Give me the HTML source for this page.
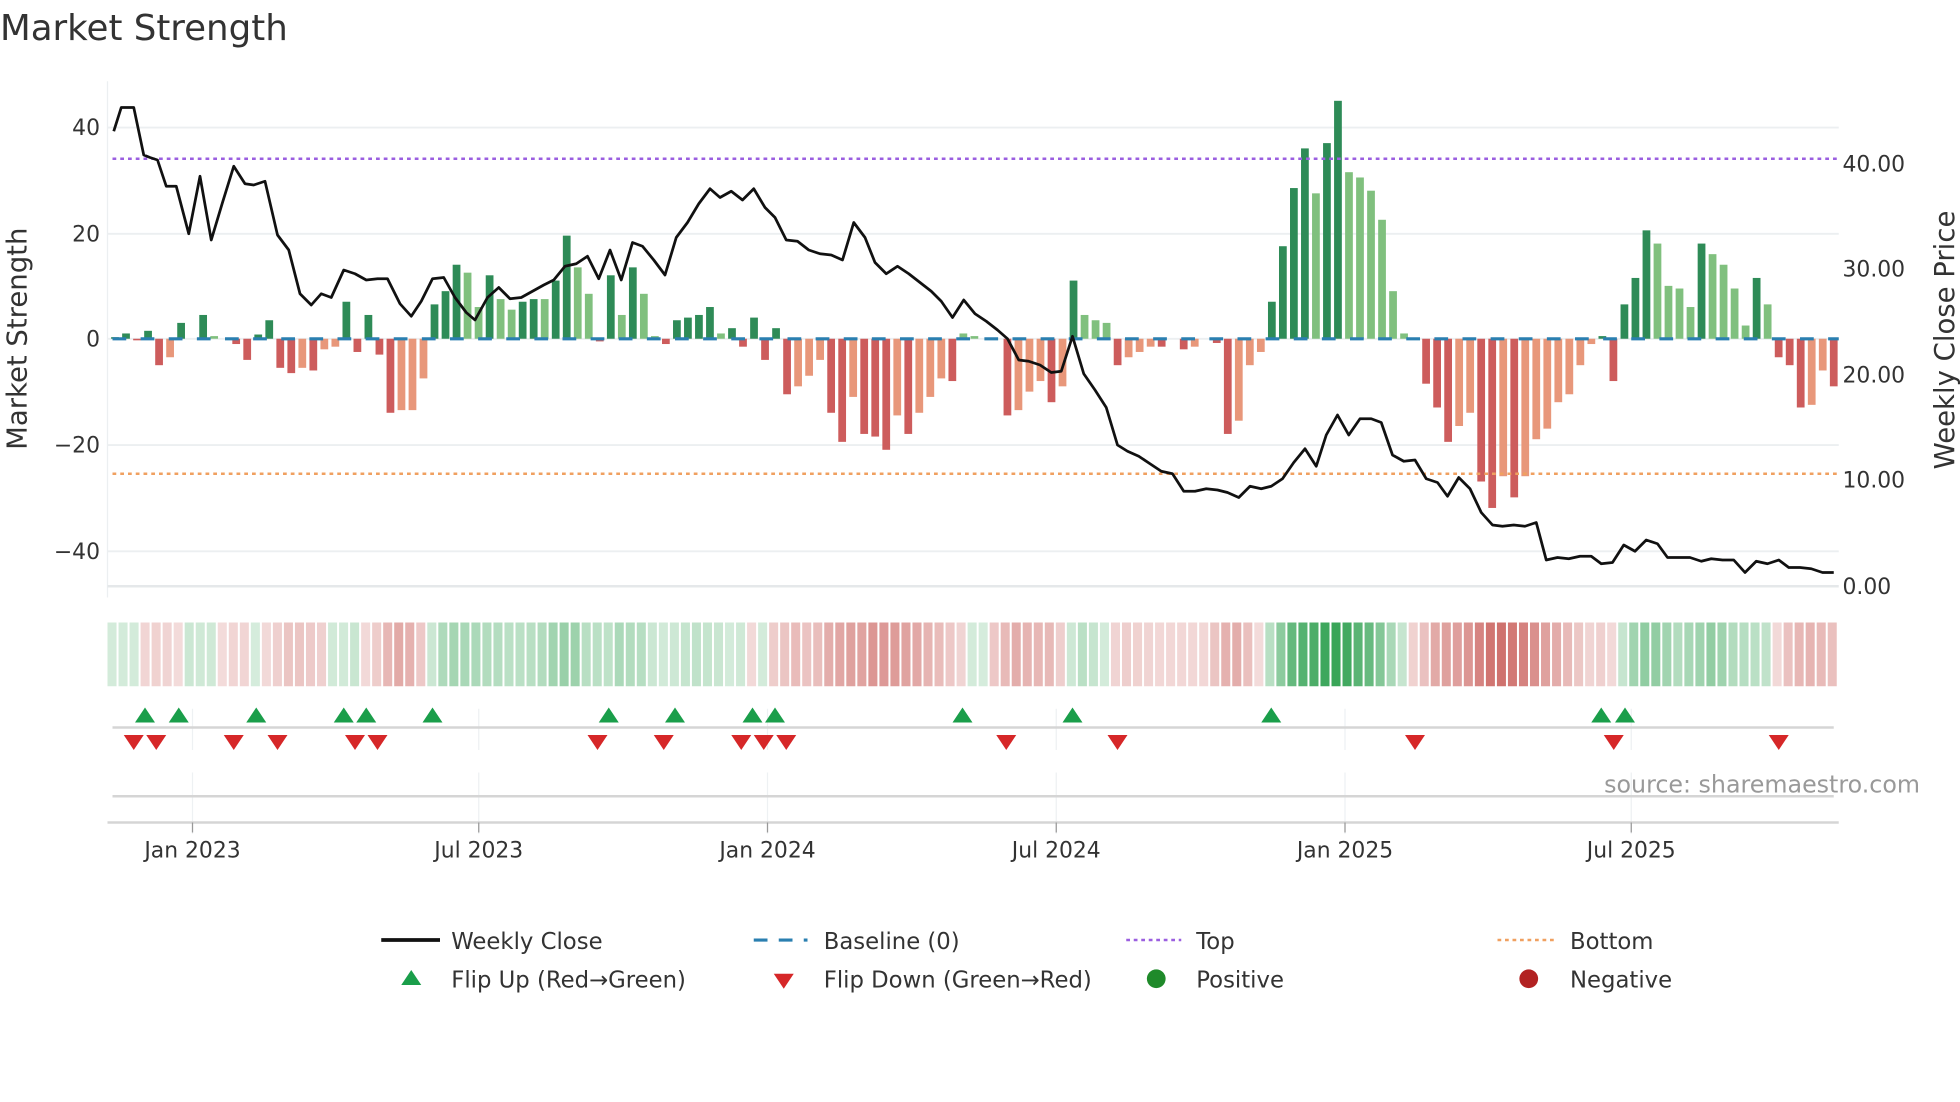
<!DOCTYPE html>
<html><head><meta charset="utf-8"><style>
html,body{margin:0;padding:0;background:#fff;}
svg{display:block}
text{font-family:"DejaVu Sans","Liberation Sans",sans-serif;fill:#333}
</style></head><body>
<svg id="s" width="1960" height="1102" viewBox="0 0 1568 881.6" xmlns="http://www.w3.org/2000/svg">
<text x="0" y="32" font-size="28.5">Market Strength</text>
<g id="grid"></g>
<g id="heat"></g>
<g id="bars"></g>
<g id="over"></g>
<g font-size="17.5">
<text x="80" y="108" text-anchor="end">40</text>
<text x="80" y="193" text-anchor="end">20</text>
<text x="80" y="277" text-anchor="end">0</text>
<text x="80" y="362" text-anchor="end">−20</text>
<text x="80" y="447" text-anchor="end">−40</text>
<text x="1474" y="137">40.00</text>
<text x="1474" y="221">30.00</text>
<text x="1474" y="306">20.00</text>
<text x="1474" y="390">10.00</text>
<text x="1474" y="475">0.00</text>
<text x="154" y="686" text-anchor="middle">Jan 2023</text>
<text x="383" y="686" text-anchor="middle">Jul 2023</text>
<text x="614" y="686" text-anchor="middle">Jan 2024</text>
<text x="845" y="686" text-anchor="middle">Jul 2024</text>
<text x="1076" y="686" text-anchor="middle">Jan 2025</text>
<text x="1305" y="686" text-anchor="middle">Jul 2025</text>
</g>
<text font-size="22" transform="translate(21,271) rotate(-90)" text-anchor="middle">Market Strength</text>
<text font-size="22" transform="translate(1563,272) rotate(-90)" text-anchor="middle">Weekly Close Price</text>
<text x="1536" y="634" font-size="19" text-anchor="end" style="fill:#999">source: sharemaestro.com</text>
<g font-size="18.2">
<line x1="305" y1="752" x2="352" y2="752" stroke="#111" stroke-width="3"/>
<text x="361" y="759">Weekly Close</text>
<line x1="603" y1="752" x2="646" y2="752" stroke="#2a7fb0" stroke-width="2.5" stroke-dasharray="11 9"/>
<text x="659" y="759">Baseline (0)</text>
<line x1="901" y1="752" x2="945" y2="752" stroke="#9b5fe0" stroke-width="2" stroke-dasharray="3 3"/>
<text x="957" y="759">Top</text>
<line x1="1198" y1="752" x2="1243" y2="752" stroke="#f0a060" stroke-width="2" stroke-dasharray="3 3"/>
<text x="1256" y="759">Bottom</text>
<polygon points="329,776 337,788 321,788" fill="#1a9e4a"/>
<text x="361" y="790">Flip Up (Red→Green)</text>
<polygon points="619,779 635,779 627,791" fill="#d62728"/>
<text x="659" y="790">Flip Down (Green→Red)</text>
<circle cx="925" cy="783" r="7.5" fill="#1f8a2a"/>
<text x="957" y="790">Positive</text>
<circle cx="1223" cy="783" r="7.5" fill="#b22222"/>
<text x="1256" y="790">Negative</text>
</g>
</svg>
<script>
var NS="http://www.w3.org/2000/svg";
function el(p,t,a){var e=document.createElementNS(NS,t);for(var k in a)e.setAttribute(k,a[k]);p.appendChild(e);return e;}
var G=document.getElementById('grid'),H=document.getElementById('heat'),B=document.getElementById('bars'),O=document.getElementById('over');
[102,187,271,356,441].forEach(function(y){el(G,'line',{x1:86,x2:1471,y1:y,y2:y,stroke:'#eceff1','stroke-width':1.5});});
el(G,'line',{x1:86,x2:86,y1:65,y2:478,stroke:'#eceff1','stroke-width':1});
el(G,'line',{x1:86,x2:1471,y1:469,y2:469,stroke:'#e5e8ea','stroke-width':2});
[154,383,614,845,1076,1305].forEach(function(x){
 el(G,'line',{x1:x,x2:x,y1:567,y2:600,stroke:'#eef1f3','stroke-width':1});
 el(G,'line',{x1:x,x2:x,y1:618,y2:667,stroke:'#eef1f3','stroke-width':1});
});
el(G,'line',{x1:90,x2:1467,y1:582,y2:582,stroke:'#d5d5d5','stroke-width':2});
el(G,'line',{x1:90,x2:1467,y1:637,y2:637,stroke:'#d5d5d5','stroke-width':2});
el(G,'line',{x1:86,x2:1471,y1:658,y2:658,stroke:'#d5d5d5','stroke-width':2});
[154,383,614,845,1076,1305].forEach(function(x){el(G,'line',{x1:x,x2:x,y1:658,y2:666,stroke:'#999','stroke-width':1});});
var bars="0.3g 1g -0.3r 1.5g -5r -3.5s 3g 0z 4.5g 0.5h 0z -1r -4r 0.8g 3.5g -5.5r -6.5r -5.5s -6r -2s -1.5s 7g -2.5r 4.5g -3r -14r -13.5s -13.5s -7.5s 6.5g 9g 14g 12.5h 6h 12g 7.5h 5.5h 7g 7.5g 7.5h 11g 19.5g 13.5h 8.5h -0.5r 12g 4.5h 13.5g 8.5h 0.5h -1r 3.5g 4g 4.5g 6g 1h 2g -1.5r 4g -4r 2g -10.5r -9s -7s -4s -14r -19.5r -11s -18r -18.5r -21r -14.5s -18r -14s -11s -7.5s -8r 1h 0.5h 0z 0z -14.5r -13.5s -10s -8s -12r -9s 11g 4.5h 3.5h 3h -5r -3.5s -2.5s -1.5s -1.5r 0z -2r -1.5s 0z -0.8r -18r -15.5s -5s -2.5s 7g 17.5g 28.5g 36g 27.5h 37g 45g 31.5h 30.5h 28h 22.5h 9h 1h 0z -8.5r -13r -19.5r -16.5s -14s -27r -32r -26s -30r -26s -19s -17s -12s -10.5s -5s -1s 0.5g -8r 6.5g 11.5g 20.5g 18h 10h 9.5h 6h 18g 16h 14h 9.5h 2.5h 11.5g 6.5h -3.5r -5r -13r -12.5s -6s -9r".split(' ');
var n=bars.length,x0=92,step=(1467-92)/(n-1);
var col={g:'#2e8b57',h:'#80c07e',r:'#cd5c5c',s:'#e8977a',z:'#2e8b57'};
var vals=[];
bars.forEach(function(b,i){
 var v=parseFloat(b),t=b.slice(-1);vals.push(v);
 var x=x0+i*step,y0=271,h=Math.abs(v)*4.23;
 if(h>0.3)el(B,'rect',{x:x-3.1,y:v>0?y0-h:y0,width:6.2,height:h,fill:col[t]});
});
var hw=(1471-86)/n;
for(var i=0;i<n;i++){
 var a=0,c=0;for(var j=i-1;j<=i+1;j++){if(j>=0&&j<n){a+=vals[j];c++;}}a/=c;
 var al=0.2+Math.min(Math.abs(a)/38,1)*0.75;
 el(H,'rect',{x:86+i*hw,y:498,width:hw-1.6,height:51,fill:a>=0?'#2ea04f':'#c24a45','fill-opacity':al.toFixed(2)});
}
el(O,'line',{x1:90,x2:1471,y1:271,y2:271,stroke:'#2a7fb0','stroke-width':2.5,'stroke-dasharray':'11 11.5'});
el(O,'line',{x1:90,x2:1471,y1:127,y2:127,stroke:'#9b5fe0','stroke-width':2,'stroke-dasharray':'3 3.2'});
el(O,'line',{x1:90,x2:1471,y1:379,y2:379,stroke:'#f0a060','stroke-width':2,'stroke-dasharray':'3 3.2'});
var pts="91,105 97,86 107,86 115,124 120,126 126,128 133,149 141,149 151,187 160,141 169,192 178,162 187,133 196,147 203,148 212,145 222,188 231,200 240,235 249,244 257,235 265,238 275,216 284,219 293,224 302,223 310,223 320,243 329,253 337,241 346,223 355,222 364,238 373,250 380,256 390,238 399,230 408,239 417,238 426,233 435,228 443,224 452,213 461,211 470,205 479,223 488,200 497,224 506,194 514,197 523,208 532,220 541,190 550,178 559,163 568,151 576,158 585,153 594,160 603,151 612,166 620,174 629,192 638,193 647,200 656,203 665,204 674,208 683,178 692,190 700,210 709,219 718,213 727,219 736,226 745,233 753,241 762,254 771,240 780,251 789,257 798,264 806,271 815,288 823,289 832,292 841,298 849,297 858,269 867,299 876,312 885,326 894,356 902,361 911,365 920,371 929,377 938,379 947,393 956,393 965,391 974,392 982,394 991,398 1000,389 1009,391 1017,389 1026,383 1035,370 1044,359 1053,373 1061,348 1070,332 1079,348 1088,335 1097,335 1105,338 1114,364 1123,369 1132,368 1141,383 1150,386 1158,397 1167,382 1176,391 1185,410 1194,420 1202,421 1211,420 1220,421 1229,418 1237,448 1246,446 1255,447 1264,445 1273,445 1281,451 1290,450 1299,436 1308,441 1317,432 1326,435 1334,446 1343,446 1352,446 1361,449 1369,447 1378,448 1387,448 1396,458 1405,449 1414,451 1423,448 1431,454 1440,454 1449,455 1458,458 1467,458";
el(O,'polyline',{points:pts,fill:'none',stroke:'#111','stroke-width':2.2,'stroke-linejoin':'round'});
[116,143,205,275,293,346,487,540,602,620,770,858,1017,1281,1300].forEach(function(x){
 el(O,'polygon',{points:(x)+',566 '+(x+8)+',578 '+(x-8)+',578',fill:'#1a9e4a'});});
[107,125,187,222,284,302,478,531,593,611,629,805,894,1132,1291,1423].forEach(function(x){
 el(O,'polygon',{points:(x-8)+',588 '+(x+8)+',588 '+x+',600',fill:'#d62728'});});
</script>
</body></html>
